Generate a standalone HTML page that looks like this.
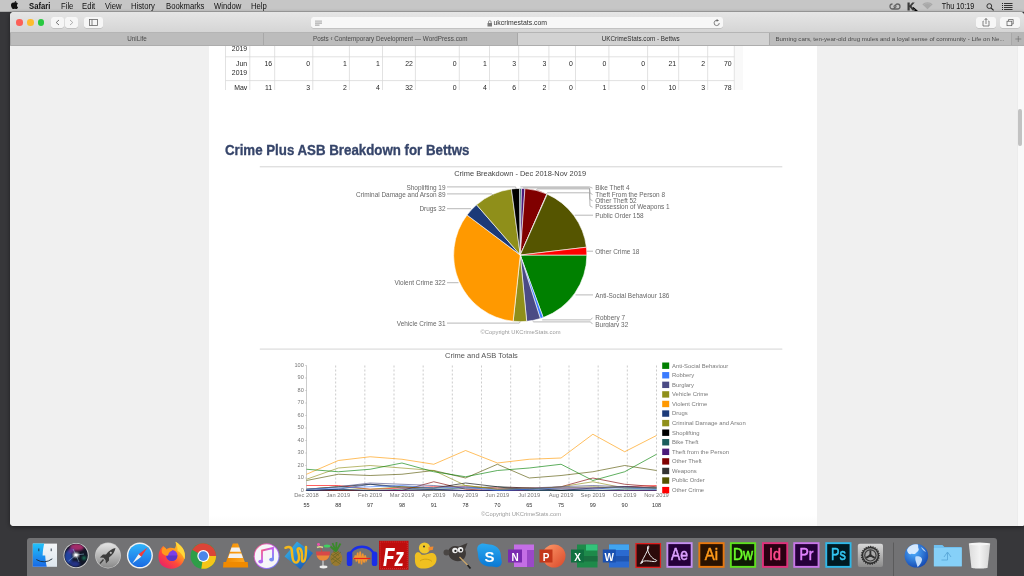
<!DOCTYPE html><html><head><meta charset="utf-8"><style>
*{margin:0;padding:0;box-sizing:border-box}
html,body{width:1024px;height:576px;overflow:hidden;background:#37373a;will-change:transform;font-family:"Liberation Sans",sans-serif}
.a{position:absolute}
#menubar{left:0;top:0;width:1024px;height:11.5px;background:#c6c6c6;color:#111;font-size:7.7px;line-height:12px;border-bottom:0.5px solid #a9a9a9}
#menubar span{position:absolute;top:0.7px;transform:scaleY(1.14);transform-origin:50% 55%}
#win{left:10px;top:12px;width:1014px;height:513.6px;border-radius:4px 4px 2px 4px;overflow:hidden;background:#f0f0f0;box-shadow:0 1px 4px rgba(0,0,0,0.45)}
#toolbar{left:0;top:0;width:1014px;height:20.5px;background:linear-gradient(#e6e6e6,#d5d5d5);border-bottom:1px solid #b5b5b5}
#tabbar{left:0;top:20.5px;width:1014px;height:13px;background:#bcbcbc;border-bottom:1px solid #adadad}
.tab{position:absolute;top:0;height:12px;font-size:6.3px;line-height:12.9px;color:#4a4a4a;text-align:center;white-space:nowrap;overflow:hidden}
#content{left:0;top:33.5px;width:1014px;height:480.1px;background:#f0f0f0;overflow:hidden}
#page{left:199px;top:0;width:608px;height:481px;background:#fff}
.btn{position:absolute;background:#f6f6f6;border-radius:2.5px;box-shadow:0 0.5px 0.5px rgba(0,0,0,0.2)}
#dock{left:27px;top:537.6px;width:969.5px;height:40px;background:#727274;border-radius:3px}
</style></head><body>
<div id="menubar" class="a">
<svg class="a" style="left:11px;top:1.2px" width="7.2" height="8.2" viewBox="0 0 16 18"><path d="M11.5 0c.2 1.3-.4 2.6-1.1 3.4-.8.9-2 1.5-3.1 1.4-.2-1.2.4-2.5 1.1-3.3C9.2.7 10.5.1 11.5 0zM15.3 6.2c-.2.1-2 1.2-2 3.5 0 2.7 2.4 3.6 2.4 3.6s-.4 1.3-1.3 2.6c-.8 1.1-1.6 2.2-2.9 2.2s-1.6-.8-3.1-.8-1.9.8-3.1.8c-1.2 0-2.1-1.200-2.900-2.300C1 14.2 0 11.600 0 9.200 0 5.400 2.500 3.400 4.900 3.400c1.300 0 2.300.8 3.100.8.800 0 1.900-.9 3.400-.9.600 0 2.600.1 3.900 1.900z" fill="#111"/></svg>
<span style="left:29px;font-weight:bold;">Safari</span>
<span style="left:61px;">File</span>
<span style="left:82px;">Edit</span>
<span style="left:105px;">View</span>
<span style="left:131px;">History</span>
<span style="left:166px;">Bookmarks</span>
<span style="left:214px;">Window</span>
<span style="left:251px;">Help</span>
<span style="left:941.8px;font-size:7.2px">Thu 10:19</span>
<svg class="a" style="left:889px;top:2.5px" width="12" height="7" viewBox="0 0 12 7"><path d="M3.5 1 a2.5 2.5 0 1 0 0 5 h5 a2.5 2.5 0 1 0 0 -5 c-1.5 0 -2.5 1.5 -2.5 2.5 c0 1 -1 2.5 -2.5 2.5" stroke="#666" stroke-width="1.3" fill="none"/><circle cx="6" cy="3.5" r="1.3" stroke="#666" stroke-width="0.8" fill="none"/></svg>
<svg class="a" style="left:906.5px;top:2px" width="11" height="9" viewBox="0 0 11 9"><path d="M0.5 0.5 h2.2 v3 l2.6 -3 h2.4 l-3.2 3.4 l3.5 4.6 h-2.5 l-2.8 -3.6 v3.6 h-2.2z" fill="#3a3a3a"/><path d="M6 5.5 l3.6 3 h-1.5 v-1.5" stroke="#000" stroke-width="1.2" fill="none"/></svg>
<svg class="a" style="left:922px;top:2.3px" width="11" height="7.5" viewBox="0 0 11 7.5"><path d="M0.3 2.3 a7.5 7.5 0 0 1 10.4 0 L5.5 7.3z" fill="#a8a8a8"/><path d="M1.9 2.9 a5.5 5.5 0 0 1 7.2 0" stroke="#b8b8b8" stroke-width="0.5" fill="none"/></svg>
<svg class="a" style="left:985.5px;top:2.7px" width="9" height="8" viewBox="0 0 9 8"><circle cx="3.3" cy="3.1" r="2.4" stroke="#222" stroke-width="0.9" fill="none"/><path d="M5 4.8 L7.6 7.3" stroke="#222" stroke-width="1.1"/></svg>
<svg class="a" style="left:1001.5px;top:3px" width="11" height="7" viewBox="0 0 11 7"><rect x="0" y="0" width="1" height="1" fill="#222"/><rect x="0" y="2" width="1" height="1" fill="#222"/><rect x="0" y="4" width="1" height="1" fill="#222"/><rect x="0" y="6" width="1" height="1" fill="#222"/><rect x="2" y="0" width="8.5" height="1" fill="#333"/><rect x="2" y="2" width="8.5" height="1" fill="#333"/><rect x="2" y="4" width="8.5" height="1" fill="#333"/><rect x="2" y="6" width="8.5" height="1" fill="#333"/></svg>
</div>
<div id="win" class="a">
<div id="toolbar" class="a">
<div class="a" style="left:6.2px;top:7.2px;width:6.6px;height:6.6px;border-radius:50%;background:#fc5f57"></div>
<div class="a" style="left:17.2px;top:7.2px;width:6.6px;height:6.6px;border-radius:50%;background:#fdbc2e"></div>
<div class="a" style="left:27.9px;top:7.2px;width:6.6px;height:6.6px;border-radius:50%;background:#28c840"></div>
<div class="btn" style="left:41px;top:5px;width:13px;height:11px"></div>
<div class="btn" style="left:54.5px;top:5px;width:13px;height:11px"></div>
<svg class="a" style="left:41px;top:5px" width="27" height="11"><path d="M8 3 L5.2 5.5 L8 8" stroke="#555" stroke-width="0.8" fill="none"/><path d="M19 3 L21.8 5.5 L19 8" stroke="#999" stroke-width="0.8" fill="none"/></svg>
<div class="btn" style="left:74px;top:5px;width:19px;height:11px"></div>
<svg class="a" style="left:74px;top:5px" width="19" height="11"><rect x="5.5" y="2.5" width="8" height="6" fill="none" stroke="#666" stroke-width="0.8"/><line x1="8" y1="2.5" x2="8" y2="8.5" stroke="#666" stroke-width="0.8"/></svg>
<div class="btn" style="left:301px;top:5px;width:411.5px;height:11px;background:#f7f7f7"></div>
<svg class="a" style="left:305px;top:8px" width="8" height="6"><rect x="0" y="0.6" width="7" height="1" fill="#aaa"/><rect x="0" y="2.6" width="7" height="1" fill="#999"/><rect x="0" y="4.6" width="4.5" height="1" fill="#999"/></svg>
<svg class="a" style="left:477px;top:7.5px" width="6" height="7"><rect x="0.5" y="3" width="4.5" height="3.5" fill="#7a7a7a"/><path d="M1.5 3 V2 a1.3 1.3 0 0 1 2.6 0 V3" stroke="#7a7a7a" stroke-width="0.8" fill="none"/></svg>
<div class="a" style="left:483.5px;top:5px;font-size:6.9px;line-height:11px;color:#333">ukcrimestats.com</div>
<svg class="a" style="left:703px;top:6.5px" width="8" height="8"><path d="M6.3 4 A2.6 2.6 0 1 1 4 1.4" stroke="#666" stroke-width="0.8" fill="none"/><path d="M3.6 0 L6 1.4 L3.6 2.8z" fill="#666"/></svg>
<div class="btn" style="left:966px;top:5px;width:19.5px;height:11px"></div>
<svg class="a" style="left:966px;top:5px" width="20" height="11"><path d="M7.5 4 H7 V9 H13 V4 H12.5" stroke="#555" stroke-width="0.7" fill="none"/><path d="M10 7 V1.5 M8.6 3 L10 1.5 L11.4 3" stroke="#555" stroke-width="0.7" fill="none"/></svg>
<div class="btn" style="left:990px;top:5px;width:19.5px;height:11px"></div>
<svg class="a" style="left:990px;top:5px" width="20" height="11"><rect x="7" y="4.2" width="4.8" height="4.5" fill="none" stroke="#555" stroke-width="0.7"/><path d="M8.5 4.2 V2.5 H13.2 V7 H11.8" stroke="#555" stroke-width="0.7" fill="none"/></svg>
</div>
<div id="tabbar" class="a">
<div class="tab" style="left:0px;width:253px;background:#bcbcbc;border-left:0.5px solid #a8a8a8;">UniLife</div>
<div class="tab" style="left:253px;width:253.5px;background:#bcbcbc;border-left:0.5px solid #a8a8a8;">Posts ‹ Contemporary Development — WordPress.com</div>
<div class="tab" style="left:506.5px;width:252px;background:#d2d2d2;border-left:0.5px solid #a8a8a8;padding-right:4.5px;color:#2e2e2e;">UKCrimeStats.com - Bettws</div>
<div class="tab" style="left:758.5px;width:242px;background:#bcbcbc;border-left:0.5px solid #a8a8a8;font-size:6.15px;">Burning cars, ten-year-old drug mules and a loyal sense of community - Life on Ne...</div>
<div class="tab" style="left:1000.5px;width:13.5px;background:#b6b6b6;border-left:0.5px solid #a8a8a8"><svg width="12" height="12" style="position:absolute;left:0;top:0"><path d="M6.3 3 V9 M3.3 6 H9.3" stroke="#6a6a6a" stroke-width="0.6"/></svg></div>
</div>
<div id="content" class="a">
<div id="page" class="a">
</div>
<div class="a" style="left:199px;top:469px;width:608px;height:12px;background:linear-gradient(#fff,#f9f9f9)"></div>
<svg class="a" width="1013" height="481" viewBox="10 45.5 1013 481" style="left:0;top:0;will-change:transform" font-family="Liberation Sans, sans-serif">
<defs><clipPath id="tclip"><rect x="200" y="40" width="600" height="49.4"/></clipPath></defs>
<g clip-path="url(#tclip)">
<rect x="735" y="40" width="8" height="49.4" fill="#f9f9f9"/>
<line x1="225.5" y1="30" x2="225.5" y2="100" stroke="#d8d8d8" stroke-width="0.75"/>
<line x1="249.8" y1="30" x2="249.8" y2="100" stroke="#d8d8d8" stroke-width="0.75"/>
<line x1="274.7" y1="30" x2="274.7" y2="100" stroke="#d8d8d8" stroke-width="0.75"/>
<line x1="312.8" y1="30" x2="312.8" y2="100" stroke="#d8d8d8" stroke-width="0.75"/>
<line x1="349.4" y1="30" x2="349.4" y2="100" stroke="#d8d8d8" stroke-width="0.75"/>
<line x1="382.5" y1="30" x2="382.5" y2="100" stroke="#d8d8d8" stroke-width="0.75"/>
<line x1="415.4" y1="30" x2="415.4" y2="100" stroke="#d8d8d8" stroke-width="0.75"/>
<line x1="459.3" y1="30" x2="459.3" y2="100" stroke="#d8d8d8" stroke-width="0.75"/>
<line x1="489.5" y1="30" x2="489.5" y2="100" stroke="#d8d8d8" stroke-width="0.75"/>
<line x1="518.7" y1="30" x2="518.7" y2="100" stroke="#d8d8d8" stroke-width="0.75"/>
<line x1="548.9" y1="30" x2="548.9" y2="100" stroke="#d8d8d8" stroke-width="0.75"/>
<line x1="575.5" y1="30" x2="575.5" y2="100" stroke="#d8d8d8" stroke-width="0.75"/>
<line x1="608.9" y1="30" x2="608.9" y2="100" stroke="#d8d8d8" stroke-width="0.75"/>
<line x1="647.6" y1="30" x2="647.6" y2="100" stroke="#d8d8d8" stroke-width="0.75"/>
<line x1="678.7" y1="30" x2="678.7" y2="100" stroke="#d8d8d8" stroke-width="0.75"/>
<line x1="707.7" y1="30" x2="707.7" y2="100" stroke="#d8d8d8" stroke-width="0.75"/>
<line x1="734.3" y1="30" x2="734.3" y2="100" stroke="#d8d8d8" stroke-width="0.75"/>
<line x1="225.5" y1="56.3" x2="734.3" y2="56.3" stroke="#d8d8d8" stroke-width="0.75"/>
<line x1="225.5" y1="80.1" x2="734.3" y2="80.1" stroke="#d8d8d8" stroke-width="0.75"/>
<line x1="225.5" y1="32.8" x2="734.3" y2="32.8" stroke="#d8d8d8" stroke-width="0.75"/>
<g font-size="6.9" fill="#262626" text-anchor="end">
<text x="247.20000000000002" y="50.6">2019</text>
<text x="247.20000000000002" y="65.8">Jun</text>
<text x="247.20000000000002" y="74.6">2019</text>
<text x="272.09999999999997" y="65.9">16</text>
<text x="310.2" y="65.9">0</text>
<text x="346.79999999999995" y="65.9">1</text>
<text x="379.9" y="65.9">1</text>
<text x="412.79999999999995" y="65.9">22</text>
<text x="456.7" y="65.9">0</text>
<text x="486.9" y="65.9">1</text>
<text x="516.1" y="65.9">3</text>
<text x="546.3" y="65.9">3</text>
<text x="572.9" y="65.9">0</text>
<text x="606.3" y="65.9">0</text>
<text x="645.0" y="65.9">0</text>
<text x="676.1" y="65.9">21</text>
<text x="705.1" y="65.9">2</text>
<text x="731.6999999999999" y="65.9">70</text>
<text x="247.20000000000002" y="89.7">May</text>
<text x="272.09999999999997" y="89.7">11</text>
<text x="310.2" y="89.7">3</text>
<text x="346.79999999999995" y="89.7">2</text>
<text x="379.9" y="89.7">4</text>
<text x="412.79999999999995" y="89.7">32</text>
<text x="456.7" y="89.7">0</text>
<text x="486.9" y="89.7">4</text>
<text x="516.1" y="89.7">6</text>
<text x="546.3" y="89.7">2</text>
<text x="572.9" y="89.7">0</text>
<text x="606.3" y="89.7">1</text>
<text x="645.0" y="89.7">0</text>
<text x="676.1" y="89.7">10</text>
<text x="705.1" y="89.7">3</text>
<text x="731.6999999999999" y="89.7">78</text>
</g></g>
<text x="224.9" y="0" transform="translate(0,154.8) scale(1,1.08)" font-size="13.3" font-weight="bold" fill="#36456a" stroke="#36456a" stroke-width="0.3">Crime Plus ASB Breakdown for Bettws</text>
<line x1="259.8" y1="166.3" x2="782.3" y2="166.3" stroke="#cfcfcf" stroke-width="0.9"/>
<line x1="259.8" y1="348.6" x2="782.3" y2="348.6" stroke="#cfcfcf" stroke-width="0.9"/>
<text x="520.2" y="175.6" font-size="7.45" fill="#444" text-anchor="middle">Crime Breakdown - Dec 2018-Nov 2019</text>
<path d="M520.25,254.55 L586.85,254.55 A66.6,66.6 0 0 1 543.22,317.06 Z" fill="#008000" stroke="#fff" stroke-width="0.6" stroke-linejoin="round"/>
<path d="M520.25,254.55 L543.22,317.06 A66.6,66.6 0 0 1 540.33,318.05 Z" fill="#3a7bff" stroke="#fff" stroke-width="0.6" stroke-linejoin="round"/>
<path d="M520.25,254.55 L540.33,318.05 A66.6,66.6 0 0 1 526.68,320.84 Z" fill="#4b4b85" stroke="#fff" stroke-width="0.6" stroke-linejoin="round"/>
<path d="M520.25,254.55 L526.68,320.84 A66.6,66.6 0 0 1 513.17,320.77 Z" fill="#8f8f1a" stroke="#fff" stroke-width="0.6" stroke-linejoin="round"/>
<path d="M520.25,254.55 L513.17,320.77 A66.6,66.6 0 0 1 467.04,214.49 Z" fill="#ff9900" stroke="#fff" stroke-width="0.6" stroke-linejoin="round"/>
<path d="M520.25,254.55 L467.04,214.49 A66.6,66.6 0 0 1 476.55,204.30 Z" fill="#1c3a78" stroke="#fff" stroke-width="0.6" stroke-linejoin="round"/>
<path d="M520.25,254.55 L476.55,204.30 A66.6,66.6 0 0 1 511.44,188.54 Z" fill="#8f8f1a" stroke="#fff" stroke-width="0.6" stroke-linejoin="round"/>
<path d="M520.25,254.55 L511.44,188.54 A66.6,66.6 0 0 1 519.70,187.95 Z" fill="#000000" stroke="#fff" stroke-width="0.6" stroke-linejoin="round"/>
<path d="M520.25,254.55 L519.70,187.95 A66.6,66.6 0 0 1 521.45,187.96 Z" fill="#1a5c5c" stroke="#fff" stroke-width="0.6" stroke-linejoin="round"/>
<path d="M520.25,254.55 L521.45,187.96 A66.6,66.6 0 0 1 524.94,188.12 Z" fill="#4b1a7a" stroke="#fff" stroke-width="0.6" stroke-linejoin="round"/>
<path d="M520.25,254.55 L524.94,188.12 A66.6,66.6 0 0 1 546.87,193.50 Z" fill="#800000" stroke="#fff" stroke-width="0.6" stroke-linejoin="round"/>
<path d="M520.25,254.55 L546.87,193.50 A66.6,66.6 0 0 1 547.27,193.68 Z" fill="#333333" stroke="#fff" stroke-width="0.6" stroke-linejoin="round"/>
<path d="M520.25,254.55 L547.27,193.68 A66.6,66.6 0 0 1 586.39,246.71 Z" fill="#555500" stroke="#fff" stroke-width="0.6" stroke-linejoin="round"/>
<path d="M520.25,254.55 L586.39,246.71 A66.6,66.6 0 0 1 586.85,254.55 Z" fill="#ff0000" stroke="#fff" stroke-width="0.6" stroke-linejoin="round"/>
<polyline points="447,186.4 515.6,186.4 516.3,188.5" fill="none" stroke="#9a9a9a" stroke-width="0.7"/>
<polyline points="447,193.4 491.5,193.4 493.5,195" fill="none" stroke="#9a9a9a" stroke-width="0.7"/>
<polyline points="447,208.2 471,208.2" fill="none" stroke="#9a9a9a" stroke-width="0.7"/>
<polyline points="447,282.2 458.5,282.2" fill="none" stroke="#9a9a9a" stroke-width="0.7"/>
<polyline points="447,322.6 519.3,322.6 520.3,321.2" fill="none" stroke="#9a9a9a" stroke-width="0.7"/>
<polyline points="575.5,294.4 593,294.4" fill="none" stroke="#9a9a9a" stroke-width="0.7"/>
<polyline points="542.2,319.4 590.5,319.4 592.5,317.2" fill="none" stroke="#9a9a9a" stroke-width="0.7"/>
<polyline points="532.5,320.4 533.7,321.4 590.5,321.4 592.5,323.6" fill="none" stroke="#9a9a9a" stroke-width="0.7"/>
<polyline points="586.8,250.7 593,250.7" fill="none" stroke="#9a9a9a" stroke-width="0.7"/>
<polyline points="574.7,214.7 593,214.7" fill="none" stroke="#9a9a9a" stroke-width="0.7"/>
<polyline points="520.4,186.4 589.5,186.4 592.5,187.6" fill="none" stroke="#9a9a9a" stroke-width="0.7"/>
<polyline points="522.8,188 523.5,187.4 589.5,187.4 590,192.5 592.5,194" fill="none" stroke="#9a9a9a" stroke-width="0.7"/>
<polyline points="536.5,189.5 537.3,188.4 589.5,188.4 590,199 592.5,200.2" fill="none" stroke="#9a9a9a" stroke-width="0.7"/>
<polyline points="546.5,193.2 547.3,192.3 589.5,192.3 590,205.5 592.5,206.7" fill="none" stroke="#9a9a9a" stroke-width="0.7"/>
<g font-size="6.45" fill="#666">
<text x="445.5" y="189.7" text-anchor="end">Shoplifting 19</text>
<text x="445.5" y="196.1" text-anchor="end">Criminal Damage and Arson 89</text>
<text x="445.5" y="210.7" text-anchor="end">Drugs 32</text>
<text x="445.5" y="284.8" text-anchor="end">Violent Crime 322</text>
<text x="445.5" y="325.8" text-anchor="end">Vehicle Crime 31</text>
<clipPath id="rlclip"><rect x="590" y="170" width="200" height="156.8"/></clipPath><g clip-path="url(#rlclip)">
<text x="595.3" y="189.89999999999998">Bike Theft 4</text>
<text x="595.3" y="196.2">Theft From the Person 8</text>
<text x="595.3" y="202.39999999999998">Other Theft 52</text>
<text x="595.3" y="208.95">Possession of Weapons 1</text>
<text x="595.3" y="217.39999999999998">Public Order 158</text>
<text x="595.3" y="253.5">Other Crime 18</text>
<text x="595.3" y="297.09999999999997">Anti-Social Behaviour 186</text>
<text x="595.3" y="319.09999999999997">Robbery 7</text>
<text x="595.3" y="326.4">Burglary 32</text>
</g>
</g>
<text x="520.6" y="333.4" font-size="5.8" fill="#9a9a9a" text-anchor="middle">©Copyright UKCrimeStats.com</text>
<text x="481.4" y="357.8" font-size="7.5" fill="#555" text-anchor="middle">Crime and ASB Totals</text>
<line x1="335.67" y1="365.0" x2="335.67" y2="490.0" stroke="#aaa" stroke-width="0.6" stroke-dasharray="2,2"/>
<line x1="364.83" y1="365.0" x2="364.83" y2="490.0" stroke="#aaa" stroke-width="0.6" stroke-dasharray="2,2"/>
<line x1="394.00" y1="365.0" x2="394.00" y2="490.0" stroke="#aaa" stroke-width="0.6" stroke-dasharray="2,2"/>
<line x1="423.17" y1="365.0" x2="423.17" y2="490.0" stroke="#aaa" stroke-width="0.6" stroke-dasharray="2,2"/>
<line x1="452.33" y1="365.0" x2="452.33" y2="490.0" stroke="#aaa" stroke-width="0.6" stroke-dasharray="2,2"/>
<line x1="481.50" y1="365.0" x2="481.50" y2="490.0" stroke="#aaa" stroke-width="0.6" stroke-dasharray="2,2"/>
<line x1="510.67" y1="365.0" x2="510.67" y2="490.0" stroke="#aaa" stroke-width="0.6" stroke-dasharray="2,2"/>
<line x1="539.83" y1="365.0" x2="539.83" y2="490.0" stroke="#aaa" stroke-width="0.6" stroke-dasharray="2,2"/>
<line x1="569.00" y1="365.0" x2="569.00" y2="490.0" stroke="#aaa" stroke-width="0.6" stroke-dasharray="2,2"/>
<line x1="598.17" y1="365.0" x2="598.17" y2="490.0" stroke="#aaa" stroke-width="0.6" stroke-dasharray="2,2"/>
<line x1="627.33" y1="365.0" x2="627.33" y2="490.0" stroke="#aaa" stroke-width="0.6" stroke-dasharray="2,2"/>
<line x1="656.50" y1="365.0" x2="656.50" y2="490.0" stroke="#aaa" stroke-width="0.6" stroke-dasharray="2,2"/>
<line x1="306.5" y1="365.0" x2="306.5" y2="490.0" stroke="#aaa" stroke-width="0.6"/>
<line x1="306.5" y1="490.0" x2="656.5" y2="490.0" stroke="#999" stroke-width="0.8"/>
<g font-size="5.6" fill="#777" text-anchor="end">
<line x1="305.3" y1="490.0" x2="306.5" y2="490.0" stroke="#aaa" stroke-width="0.6"/>
<text x="303.8" y="491.3">0</text>
<line x1="305.3" y1="477.5" x2="306.5" y2="477.5" stroke="#aaa" stroke-width="0.6"/>
<text x="303.8" y="478.8">10</text>
<line x1="305.3" y1="465.0" x2="306.5" y2="465.0" stroke="#aaa" stroke-width="0.6"/>
<text x="303.8" y="466.3">20</text>
<line x1="305.3" y1="452.5" x2="306.5" y2="452.5" stroke="#aaa" stroke-width="0.6"/>
<text x="303.8" y="453.8">30</text>
<line x1="305.3" y1="440.0" x2="306.5" y2="440.0" stroke="#aaa" stroke-width="0.6"/>
<text x="303.8" y="441.3">40</text>
<line x1="305.3" y1="427.5" x2="306.5" y2="427.5" stroke="#aaa" stroke-width="0.6"/>
<text x="303.8" y="428.8">50</text>
<line x1="305.3" y1="415.0" x2="306.5" y2="415.0" stroke="#aaa" stroke-width="0.6"/>
<text x="303.8" y="416.3">60</text>
<line x1="305.3" y1="402.5" x2="306.5" y2="402.5" stroke="#aaa" stroke-width="0.6"/>
<text x="303.8" y="403.8">70</text>
<line x1="305.3" y1="390.0" x2="306.5" y2="390.0" stroke="#aaa" stroke-width="0.6"/>
<text x="303.8" y="391.3">80</text>
<line x1="305.3" y1="377.5" x2="306.5" y2="377.5" stroke="#aaa" stroke-width="0.6"/>
<text x="303.8" y="378.8">90</text>
<line x1="305.3" y1="365.0" x2="306.5" y2="365.0" stroke="#aaa" stroke-width="0.6"/>
<text x="303.8" y="366.3">100</text>
</g>
<polyline points="306.50,485.00 338.32,485.00 370.14,488.75 401.95,487.50 433.77,486.25 465.59,486.25 497.41,487.50 529.23,487.50 561.05,487.50 592.86,487.50 624.68,486.25 656.50,485.00" fill="none" stroke="#ff0000" stroke-opacity="0.7" stroke-width="0.9"/>
<polyline points="306.50,480.00 338.32,473.75 370.14,475.00 401.95,473.75 433.77,470.00 465.59,477.50 497.41,463.75 529.23,477.50 561.05,475.00 592.86,471.25 624.68,465.00 656.50,470.00" fill="none" stroke="#555500" stroke-opacity="0.7" stroke-width="0.9"/>
<polyline points="306.50,490.00 338.32,490.00 370.14,490.00 401.95,490.00 433.77,490.00 465.59,490.00 497.41,490.00 529.23,490.00 561.05,490.00 592.86,490.00 624.68,490.00 656.50,490.00" fill="none" stroke="#333333" stroke-opacity="0.7" stroke-width="0.9"/>
<polyline points="306.50,490.00 338.32,490.00 370.14,490.00 401.95,490.00 433.77,481.25 465.59,488.75 497.41,490.00 529.23,488.75 561.05,486.25 592.86,477.50 624.68,483.75 656.50,486.25" fill="none" stroke="#800000" stroke-opacity="0.7" stroke-width="0.9"/>
<polyline points="306.50,490.00 338.32,488.75 370.14,490.00 401.95,490.00 433.77,488.75 465.59,490.00 497.41,490.00 529.23,490.00 561.05,490.00 592.86,490.00 624.68,490.00 656.50,490.00" fill="none" stroke="#4b1a7a" stroke-opacity="0.7" stroke-width="0.9"/>
<polyline points="306.50,490.00 338.32,488.75 370.14,490.00 401.95,488.75 433.77,488.75 465.59,487.50 497.41,486.25 529.23,490.00 561.05,490.00 592.86,490.00 624.68,488.75 656.50,488.75" fill="none" stroke="#1a5c5c" stroke-opacity="0.7" stroke-width="0.9"/>
<polyline points="306.50,488.75 338.32,486.25 370.14,483.75 401.95,486.25 433.77,487.50 465.59,482.50 497.41,486.25 529.23,487.50 561.05,490.00 592.86,487.50 624.68,486.25 656.50,487.50" fill="none" stroke="#000000" stroke-opacity="0.7" stroke-width="0.9"/>
<polyline points="306.50,478.75 338.32,467.50 370.14,465.00 401.95,467.50 433.77,470.00 465.59,485.00 497.41,488.75 529.23,488.75 561.05,486.25 592.86,481.25 624.68,487.50 656.50,487.50" fill="none" stroke="#8f8f1a" stroke-opacity="0.7" stroke-width="0.9"/>
<polyline points="306.50,490.00 338.32,488.75 370.14,483.75 401.95,487.50 433.77,488.75 465.59,490.00 497.41,490.00 529.23,488.75 561.05,488.75 592.86,488.75 624.68,486.25 656.50,487.50" fill="none" stroke="#1c3a78" stroke-opacity="0.7" stroke-width="0.9"/>
<polyline points="306.50,473.75 338.32,460.00 370.14,456.25 401.95,458.75 433.77,463.75 465.59,450.00 497.41,462.50 529.23,458.75 561.05,457.50 592.86,433.75 624.68,451.25 656.50,435.00" fill="none" stroke="#ff9900" stroke-opacity="0.7" stroke-width="0.9"/>
<polyline points="306.50,488.75 338.32,486.25 370.14,488.75 401.95,486.25 433.77,487.50 465.59,485.00 497.41,488.75 529.23,487.50 561.05,487.50 592.86,486.25 624.68,487.50 656.50,487.50" fill="none" stroke="#8f8f1a" stroke-opacity="0.7" stroke-width="0.9"/>
<polyline points="306.50,488.75 338.32,486.25 370.14,482.50 401.95,483.75 433.77,485.00 465.59,487.50 497.41,488.75 529.23,487.50 561.05,486.25 592.86,485.00 624.68,486.25 656.50,487.50" fill="none" stroke="#4b4b85" stroke-opacity="0.7" stroke-width="0.9"/>
<polyline points="306.50,488.75 338.32,487.50 370.14,486.25 401.95,485.00 433.77,487.50 465.59,486.25 497.41,490.00 529.23,488.75 561.05,487.50 592.86,487.50 624.68,487.50 656.50,488.75" fill="none" stroke="#3a7bff" stroke-opacity="0.7" stroke-width="0.9"/>
<polyline points="306.50,468.75 338.32,471.25 370.14,468.75 401.95,462.50 433.77,471.25 465.59,476.25 497.41,470.00 529.23,467.50 561.05,463.75 592.86,480.00 624.68,471.25 656.50,453.75" fill="none" stroke="#008000" stroke-opacity="0.7" stroke-width="0.9"/>
<g font-size="5.75" fill="#777" text-anchor="middle">
<text x="306.50" y="496.4">Dec 2018</text>
<text x="338.32" y="496.4">Jan 2019</text>
<text x="370.14" y="496.4">Feb 2019</text>
<text x="401.95" y="496.4">Mar 2019</text>
<text x="433.77" y="496.4">Apr 2019</text>
<text x="465.59" y="496.4">May 2019</text>
<text x="497.41" y="496.4">Jun 2019</text>
<text x="529.23" y="496.4">Jul 2019</text>
<text x="561.05" y="496.4">Aug 2019</text>
<text x="592.86" y="496.4">Sep 2019</text>
<text x="624.68" y="496.4">Oct 2019</text>
<text x="656.50" y="496.4">Nov 2019</text>
</g><g font-size="5.5" fill="#333" text-anchor="middle">
<text x="306.50" y="506.9">55</text>
<text x="338.32" y="506.9">88</text>
<text x="370.14" y="506.9">97</text>
<text x="401.95" y="506.9">98</text>
<text x="433.77" y="506.9">91</text>
<text x="465.59" y="506.9">78</text>
<text x="497.41" y="506.9">70</text>
<text x="529.23" y="506.9">65</text>
<text x="561.05" y="506.9">75</text>
<text x="592.86" y="506.9">99</text>
<text x="624.68" y="506.9">90</text>
<text x="656.50" y="506.9">108</text>
</g>
<text x="521" y="515.1" font-size="5.8" fill="#9a9a9a" text-anchor="middle">©Copyright UKCrimeStats.com</text>
<g font-size="5.9" fill="#7a7a7a">
<rect x="662.2" y="362.0" width="7" height="6.4" fill="#008000"/>
<text x="672" y="367.09999999999997">Anti-Social Behaviour</text>
<rect x="662.2" y="371.57" width="7" height="6.4" fill="#3a7bff"/>
<text x="672" y="376.66999999999996">Robbery</text>
<rect x="662.2" y="381.14" width="7" height="6.4" fill="#4b4b85"/>
<text x="672" y="386.23999999999995">Burglary</text>
<rect x="662.2" y="390.71" width="7" height="6.4" fill="#8f8f1a"/>
<text x="672" y="395.80999999999995">Vehicle Crime</text>
<rect x="662.2" y="400.28000000000003" width="7" height="6.4" fill="#ff9900"/>
<text x="672" y="405.38">Violent Crime</text>
<rect x="662.2" y="409.85" width="7" height="6.4" fill="#1c3a78"/>
<text x="672" y="414.95">Drugs</text>
<rect x="662.2" y="419.42" width="7" height="6.4" fill="#8f8f1a"/>
<text x="672" y="424.52">Criminal Damage and Arson</text>
<rect x="662.2" y="428.99" width="7" height="6.4" fill="#000000"/>
<text x="672" y="434.09">Shoplifting</text>
<rect x="662.2" y="438.56" width="7" height="6.4" fill="#1a5c5c"/>
<text x="672" y="443.65999999999997">Bike Theft</text>
<rect x="662.2" y="448.13" width="7" height="6.4" fill="#4b1a7a"/>
<text x="672" y="453.22999999999996">Theft from the Person</text>
<rect x="662.2" y="457.7" width="7" height="6.4" fill="#800000"/>
<text x="672" y="462.79999999999995">Other Theft</text>
<rect x="662.2" y="467.27000000000004" width="7" height="6.4" fill="#333333"/>
<text x="672" y="472.37">Weapons</text>
<rect x="662.2" y="476.84" width="7" height="6.4" fill="#555500"/>
<text x="672" y="481.93999999999994">Public Order</text>
<rect x="662.2" y="486.41" width="7" height="6.4" fill="#ff0000"/>
<text x="672" y="491.51">Other Crime</text>
</g>
</svg>
<div class="a" style="left:1006.6px;top:0;width:7.4px;height:481px;background:#f9f9f9;border-left:0.5px solid #ececec"></div>
<div class="a" style="left:1008px;top:63.3px;width:4.3px;height:37.5px;background:#c2c2c2;border-radius:2.2px"></div>
</div>
</div>
<div id="dock" class="a"></div>
<svg class="a" style="left:0;top:0" width="1024" height="576" viewBox="0 0 1024 576" font-family="Liberation Sans, sans-serif">
<defs>
<linearGradient id="gFinder" x1="0" y1="0" x2="0" y2="1"><stop offset="0" stop-color="#22c3fa"/><stop offset="1" stop-color="#1868e6"/></linearGradient>
<linearGradient id="gFinderR" x1="0" y1="0" x2="0" y2="1"><stop offset="0" stop-color="#f4f6f8"/><stop offset="1" stop-color="#dde6ee"/></linearGradient>
<radialGradient id="gSiri" cx="0.5" cy="0.5" r="0.5"><stop offset="0" stop-color="#ffffff"/><stop offset="0.18" stop-color="#b9e6ff"/><stop offset="0.45" stop-color="#3f55b8"/><stop offset="1" stop-color="#15183a"/></radialGradient>
<linearGradient id="gLaunch" x1="0" y1="0" x2="0" y2="1"><stop offset="0" stop-color="#e4e4e4"/><stop offset="1" stop-color="#8a8a8a"/></linearGradient>
<linearGradient id="gSafari" x1="0" y1="0" x2="0" y2="1"><stop offset="0" stop-color="#2fb4fb"/><stop offset="1" stop-color="#1a6ae3"/></linearGradient>
<radialGradient id="gFox" cx="0.6" cy="0.3" r="0.8"><stop offset="0" stop-color="#ffe14a"/><stop offset="0.45" stop-color="#ff8a1e"/><stop offset="0.8" stop-color="#f43a4e"/><stop offset="1" stop-color="#e02a7a"/></radialGradient>
<linearGradient id="gCone" x1="0" y1="0" x2="1" y2="0"><stop offset="0" stop-color="#f08a00"/><stop offset="1" stop-color="#ffa820"/></linearGradient>
<linearGradient id="gItunes" x1="0" y1="0" x2="1" y2="1"><stop offset="0" stop-color="#fb5c74"/><stop offset="0.5" stop-color="#c45cf0"/><stop offset="1" stop-color="#5a8cf8"/></linearGradient>
<linearGradient id="gSky" x1="0" y1="0" x2="0" y2="1"><stop offset="0" stop-color="#2aa8f0"/><stop offset="1" stop-color="#0a78d4"/></linearGradient>
<linearGradient id="gPrefs" x1="0" y1="0" x2="0" y2="1"><stop offset="0" stop-color="#d8d8d8"/><stop offset="1" stop-color="#8c8c8c"/></linearGradient>
<radialGradient id="gGlobe" cx="0.4" cy="0.35" r="0.7"><stop offset="0" stop-color="#4fb0ff"/><stop offset="1" stop-color="#1346b0"/></radialGradient>
<linearGradient id="gTrash" x1="0" y1="0" x2="1" y2="0"><stop offset="0" stop-color="#dcdcdc"/><stop offset="0.5" stop-color="#f2f2f2"/><stop offset="1" stop-color="#d4d4d4"/></linearGradient>
<linearGradient id="gPpt" x1="0" y1="0" x2="1" y2="1"><stop offset="0" stop-color="#ff9b6a"/><stop offset="1" stop-color="#d9482a"/></linearGradient>
</defs>
<rect x="32.8" y="543.6" width="24.2" height="23.2" fill="url(#gFinderR)"/>
<path d="M32.8 543.6 H44.2 C43.4 547 42.8 551 42.6 555.5 H45.2 C45.4 559.5 46 563.5 46.8 566.8 H32.8Z" fill="url(#gFinder)"/>
<path d="M38.8 548.5 V551.2 M51.2 548.5 V551.2" stroke="#1c2b3a" stroke-width="0.9"/>
<path d="M36.3 559.5 Q44.5 564.5 52.3 558.8" stroke="#1c2b3a" stroke-width="0.9" fill="none"/>
<filter id="fBlur" x="-20%" y="-20%" width="140%" height="140%"><feGaussianBlur stdDeviation="1.3"/></filter><clipPath id="cSiri"><circle cx="76.1" cy="555.5" r="11.4"/></clipPath>
<circle cx="76.1" cy="555.5" r="12.6" fill="#cfcfcf"/><circle cx="76.1" cy="555.5" r="11.7" fill="#121626"/>
<g clip-path="url(#cSiri)"><g filter="url(#fBlur)" opacity="0.8"><ellipse cx="77" cy="547" rx="7" ry="3.8" fill="#c8307a"/><ellipse cx="68.5" cy="557" rx="4" ry="7" fill="#2850c0"/><ellipse cx="75" cy="564" rx="5" ry="3" fill="#2a3aa0"/><ellipse cx="84" cy="558" rx="1.8" ry="1.8" fill="#20b070"/><ellipse cx="71.5" cy="550.5" rx="3" ry="2.5" fill="#7a3ab0"/></g>
<path d="M76 555 L68.5 561 M76 555 L84 554 M76 555 L79 562 M76 555 L73 549" stroke="#aee8ff" stroke-width="0.6" opacity="0.7"/><ellipse cx="76" cy="555" rx="2.8" ry="2.2" fill="#fff" filter="url(#fBlur)"/><ellipse cx="76" cy="555" rx="1.4" ry="1.1" fill="#fff"/></g>
<circle cx="108" cy="555.5" r="12.9" fill="#c8c8c8"/><circle cx="108" cy="555.5" r="12.2" fill="url(#gLaunch)"/>
<path d="M115.5 548 C112 548.5 108.5 551 106 554.5 L103 554.5 L99.8 557.5 L103.5 557.8 L105.5 560 L106 563.5 L109 560.4 L109 557.5 C112.5 555 115 551.5 115.5 548Z" fill="#3d3d3d"/><circle cx="110.8" cy="552.8" r="1.1" fill="#bbb"/><path d="M103.5 559.5 L100 563.5" stroke="#3d3d3d" stroke-width="1.4"/>
<circle cx="139.9" cy="555.5" r="13" fill="#f2f2f2"/><circle cx="139.9" cy="555.5" r="11.6" fill="url(#gSafari)"/>
<path d="M147.5 547.5 L141.3 556.8 L138.5 554.2Z" fill="#f43b3b"/><path d="M132.3 563.5 L138.5 554.2 L141.3 556.8Z" fill="#f4f4f4"/>
<linearGradient id="gFox2" x1="1" y1="0" x2="0.2" y2="1"><stop offset="0" stop-color="#ffe44a"/><stop offset="0.35" stop-color="#ffa41e"/><stop offset="0.65" stop-color="#ff4a3a"/><stop offset="1" stop-color="#e8206a"/></linearGradient>
<path d="M160 550 C157.5 555 158 562 162 565.5 C166.5 569.5 176 570 181 565 C186 560 185.5 552 182.5 548 C181 546 179 544 175.5 541.8 C176.5 545 176 547 174.5 548.5 C172 547.5 168 547.5 166 549.5 C165.5 548 164 546.5 163.3 546 C162 547 161 548.5 160 550Z" fill="url(#gFox2)"/>
<path d="M175.5 541.8 C179 544 181 546 182.5 548 C185 551.5 185.5 556 184.5 559.5 C183 555 180 552 177.5 551 C177.8 548 177 545 175.5 541.8Z" fill="#ffd83a"/>
<circle cx="171.8" cy="555.5" r="5.6" fill="#7b3ee8"/><path d="M166.2 555.5 A5.6 5.6 0 0 0 177.4 555.5Z" fill="#5b36c8"/>
<path d="M162.5 548 C164 546.5 165.5 547.5 166.5 549.5 C168.5 548.5 171 549 172.5 550.5 C170 551 168.5 553 168 555.5 C166 556 163.5 555 162 553 C161.5 551 161.8 549.5 162.5 548Z" fill="#ff9a1e"/>
<circle cx="203.3" cy="556.1" r="12.8" fill="#2e9e48"/>
<path d="M203.3 556.1 L192.20000000000002 549.7 A12.8 12.8 0 0 1 216.10000000000002 556.1 Z" fill="#db4437"/>
<path d="M203.3 556.1 L216.10000000000002 556.1 A12.8 12.8 0 0 1 201.3 568.7 Z" fill="#f5c518"/>
<circle cx="203.3" cy="556.1" r="6" fill="#fff"/><circle cx="203.3" cy="556.1" r="4.8" fill="#4a86e8"/>
<path d="M232.8 543.5 h5.2 l7 19 h-19.2z" fill="url(#gCone)"/><path d="M231.5 547.5 h7.8 l1.5 4.3 h-10.8z" fill="#f2f2f2"/><path d="M229.6 553.5 h11.8 l1.6 4.4 h-15z" fill="#f2f2f2"/><path d="M223.5 562 h24.2 l0.5 5.5 h-25.2z" fill="#f08a00"/>
<circle cx="266.6" cy="556.2" r="12.9" fill="url(#gItunes)"/><circle cx="266.6" cy="556.2" r="11.9" fill="#f6f6f8"/>
<path d="M262 561.5 V550.5 L273 548 V559.5" stroke="url(#gItunes)" stroke-width="1.8" fill="none"/><ellipse cx="260.7" cy="561.6" rx="2.4" ry="1.9" fill="#a86af2"/><ellipse cx="271.6" cy="559.6" rx="2.4" ry="1.9" fill="#7a8af4"/>
<linearGradient id="gDia" x1="0" y1="0" x2="1" y2="1"><stop offset="0" stop-color="#38c0f0"/><stop offset="1" stop-color="#1848a8"/></linearGradient>
<path d="M297 541.4 L313 553 L300.4 569.3 L284.5 556.4Z" fill="url(#gDia)"/>
<path d="M285.5 547.8 C288 546.5 290.5 546.8 291.5 549 C292.5 552 291.5 560 294.5 562 C297 563.5 299.5 561 299 556 C298.5 551 296.5 549.5 298 548.5 C300 547.5 302 550 302 555 C302 559.5 301.5 562 303.5 561.5 C306 561 306 552 306 547" stroke="#f4b81a" stroke-width="2.5" fill="none" stroke-linecap="round"/>
<ellipse cx="336.2" cy="558.5" rx="6" ry="7.5" fill="#9a7a30"/><path d="M331 554 l10 8 M331 560 l10 -8 M331.5 558 l9 6 M331.5 564 l9 -7 M333 551.5 l6 4 M333 555.5 l6 -4" stroke="#5a6020" stroke-width="0.7" opacity="0.8"/><path d="M336 551.5 l-3.5 -8.5 M336 551.5 l0.5 -9.5 M336 551.5 l4.5 -8 M336 551.5 l-5.5 -5" stroke="#3a8a2a" stroke-width="1.8"/>
<path d="M316 551.5 h14 c0 6 -3 9 -7 9 c-4 0 -7 -3 -7 -9z" fill="#d84848"/><path d="M316.5 555.5 h13 c-1 3 -3 5 -6.5 5 c-3.5 0 -5.5 -2 -6.5 -5z" fill="#e88a3a"/><path d="M323 560.5 v5.5" stroke="#ddd" stroke-width="1.1"/><ellipse cx="323.5" cy="567" rx="4" ry="1.4" fill="#eee"/><path d="M320 546 l2 6" stroke="#c44" stroke-width="0.9"/><ellipse cx="318.5" cy="544.5" rx="1.5" ry="1.4" fill="#f050b0"/><ellipse cx="327" cy="546" rx="3.2" ry="1.5" fill="#40d060"/><path d="M317 547.5 q3 -1.5 6 0" stroke="#d8d890" stroke-width="1.4" fill="none"/>
<path d="M349.5 558 C349.5 543 374.5 543 374.5 558" stroke="#1a2ee8" stroke-width="2.4" fill="none"/><rect x="346.8" y="551.5" width="5.5" height="14.5" rx="2.6" fill="#1a2ee8"/><rect x="371.8" y="551.5" width="5.5" height="14.5" rx="2.6" fill="#1a2ee8"/>
<path d="M353 558.5 h1.5 l1-3 l1 6 l1.2-9 l1.3 11 l1.2-12 l1.3 13 l1.2-11 l1.3 9 l1.2-7 l1 5 l1-2 h1.5" stroke="#ff9a2a" stroke-width="1.6" fill="none" opacity="0.9"/><path d="M353.5 558.5 h17" stroke="#e8201a" stroke-width="1.2"/>
<rect x="379" y="540.8" width="29.5" height="29" fill="#bf0d0d"/><rect x="380.2" y="542" width="27.1" height="26.6" fill="none" stroke="#d83a3a" stroke-width="0.8" stroke-dasharray="1,1"/>
<text x="393.5" y="566" font-size="26" font-weight="bold" font-style="italic" fill="#fff" text-anchor="middle" textLength="21" lengthAdjust="spacingAndGlyphs">Fz</text>
<path d="M415 558 C414 552 419 551 421 554 C422 556 427 554 431 553 C436 552 437.5 558 436 562 C434 567.5 427 569 421 568.5 C416 568 414.5 563 415 558Z" fill="#f0c020"/><circle cx="424.5" cy="548" r="5.6" fill="#f2c82a"/><path d="M428.5 547 l5 -0.5 l-0.8 3.5 l-4.2 0.6z" fill="#f08a30"/><circle cx="424" cy="546.5" r="1" fill="#333"/><path d="M420 561 c3 -2.5 9 -2.5 12 0.5" stroke="#c89a10" stroke-width="0.8" fill="none"/>
<path d="M448 552 C449 546.5 454.5 545 459 546.5 L467.5 543 L465 549.5 C467 553 466 558.5 461.5 560.5 C455.5 563 448.5 559 448 552Z" fill="#3e3a38"/><circle cx="446.5" cy="552.5" r="3" fill="#4a4644"/><circle cx="455" cy="550.5" r="2.8" fill="#eee"/><circle cx="460.5" cy="549.8" r="2.8" fill="#eee"/><circle cx="455.4" cy="550.9" r="1.1" fill="#222"/><circle cx="460.9" cy="550.2" r="1.1" fill="#222"/><path d="M459.5 557 L469 566.5" stroke="#c9a46a" stroke-width="1.2"/><path d="M467.5 565 L470.5 568.5" stroke="#222" stroke-width="1.8"/>
<path d="M483 543.6 C486 543.6 487 544.5 489.5 544.5 C496 544.5 501 549.5 501 556 C501 558.5 501.8 560 501.8 562 C501.8 565 499.5 567.2 496.5 567.2 C494.5 567.2 493 566.5 489.5 566.5 C483 566.5 478 561.5 478 555 C478 552.5 477.2 551 477.2 549 C477.2 546 479.8 543.6 483 543.6Z" fill="url(#gSky)"/>
<text x="489.5" y="561.5" font-size="15" font-weight="bold" fill="#fff" text-anchor="middle">S</text>
<rect x="514" y="544.5" width="20" height="22.5" fill="#c46ee6"/><rect x="527" y="550" width="7" height="17" fill="#9a48c8"/><rect x="508" y="549.5" width="14" height="13" fill="#7a2ab0"/>
<text x="515" y="560.5" font-size="10" font-weight="bold" fill="#fff" text-anchor="middle">N</text>
<circle cx="554" cy="556" r="11.5" fill="url(#gPpt)"/><rect x="539.5" y="549.5" width="13" height="13" fill="#c4381a"/>
<text x="546" y="560.5" font-size="10" font-weight="bold" fill="#fff" text-anchor="middle">P</text>
<rect x="577" y="544.5" width="20.5" height="23" fill="#1e8a4a"/><rect x="586" y="544.5" width="11.5" height="6" fill="#33c37a"/><rect x="577" y="556" width="20.5" height="5.5" fill="#1a7040"/><rect x="571" y="549.5" width="13" height="13" fill="#107040"/>
<text x="577.5" y="560.5" font-size="10" font-weight="bold" fill="#fff" text-anchor="middle">X</text>
<rect x="609" y="544.5" width="20" height="23" fill="#2b6ad0"/><rect x="609" y="544.5" width="20" height="5.5" fill="#41a5f0"/><rect x="609" y="556" width="20" height="5.5" fill="#1f54b0"/><rect x="602.8" y="549.5" width="13" height="13" fill="#1a50b0"/>
<text x="609.3" y="560.5" font-size="10" font-weight="bold" fill="#fff" text-anchor="middle">W</text>
<rect x="635.3" y="543" width="25.8" height="25" fill="#e01f1f"/><rect x="636.6" y="544.3" width="23.2" height="22.4" fill="#2c0b0b"/>
<path d="M641 563 C644 557 647 552 648.5 548 C649.5 545.5 647.5 545 647.5 548 C647.5 553 652 559 656 560 C657.5 560.5 656.5 562 653 561.5 C649 561 643.5 560 641 562.5 C639.5 564 641 564 643 562" stroke="#eee" stroke-width="1" fill="none"/>
<rect x="666.4" y="542.2" width="26.2" height="25.6" fill="#c48ef0"/><rect x="668.3" y="544.1" width="22.4" height="21.8" fill="#25003a"/>
<text x="679.5" y="560.1" font-size="16.4" fill="#dca2ff" stroke="#dca2ff" stroke-width="0.55" text-anchor="middle" textLength="17" lengthAdjust="spacingAndGlyphs">Ae</text>
<rect x="698.4" y="542.2" width="26.2" height="25.6" fill="#e8780e"/><rect x="700.3" y="544.1" width="22.4" height="21.8" fill="#2a1200"/>
<text x="711.5" y="560.1" font-size="16.4" fill="#ff9a1a" stroke="#ff9a1a" stroke-width="0.55" text-anchor="middle" textLength="13.3" lengthAdjust="spacingAndGlyphs">Ai</text>
<rect x="729.9" y="542.2" width="26.2" height="25.6" fill="#5ee01e"/><rect x="731.8" y="544.1" width="22.4" height="21.8" fill="#0e1a04"/>
<text x="743.0" y="560.1" font-size="16.4" fill="#6cff2a" stroke="#6cff2a" stroke-width="0.55" text-anchor="middle" textLength="20" lengthAdjust="spacingAndGlyphs">Dw</text>
<rect x="762" y="542.2" width="26.2" height="25.6" fill="#e0307a"/><rect x="763.9" y="544.1" width="22.4" height="21.8" fill="#2a0012"/>
<text x="775.1" y="560.1" font-size="16.4" fill="#ff4a8c" stroke="#ff4a8c" stroke-width="0.55" text-anchor="middle" textLength="12" lengthAdjust="spacingAndGlyphs">Id</text>
<rect x="793.3" y="542.2" width="26.2" height="25.6" fill="#c876e8"/><rect x="795.1999999999999" y="544.1" width="22.4" height="21.8" fill="#26003a"/>
<text x="806.4" y="560.1" font-size="16.4" fill="#e282ff" stroke="#e282ff" stroke-width="0.55" text-anchor="middle" textLength="14" lengthAdjust="spacingAndGlyphs">Pr</text>
<rect x="825.3" y="542.2" width="26.2" height="25.6" fill="#2eb8e8"/><rect x="827.1999999999999" y="544.1" width="22.4" height="21.8" fill="#001a22"/>
<text x="838.4" y="560.1" font-size="16.4" fill="#33c8f4" stroke="#33c8f4" stroke-width="0.55" text-anchor="middle" textLength="15" lengthAdjust="spacingAndGlyphs">Ps</text>
<rect x="857.8" y="543.7" width="25.2" height="23.3" rx="2" fill="url(#gPrefs)"/>
<polygon points="880.00,555.40 879.98,556.03 878.93,556.52 878.83,557.08 879.67,557.88 879.49,558.49 878.35,558.69 878.11,559.20 878.71,560.20 878.38,560.73 877.22,560.64 876.87,561.07 877.19,562.19 876.73,562.62 875.64,562.22 875.18,562.55 875.20,563.71 874.65,564.01 873.69,563.35 873.16,563.54 872.88,564.67 872.27,564.82 871.52,563.93 870.96,563.98 870.40,565.00 869.77,564.98 869.28,563.93 868.72,563.83 867.92,564.67 867.31,564.49 867.11,563.35 866.60,563.11 865.60,563.71 865.07,563.38 865.16,562.22 864.73,561.87 863.61,562.19 863.18,561.73 863.58,560.64 863.25,560.18 862.09,560.20 861.79,559.65 862.45,558.69 862.26,558.16 861.13,557.88 860.98,557.27 861.87,556.52 861.82,555.96 860.80,555.40 860.82,554.77 861.87,554.28 861.97,553.72 861.13,552.92 861.31,552.31 862.45,552.11 862.69,551.60 862.09,550.60 862.42,550.07 863.58,550.16 863.93,549.73 863.61,548.61 864.07,548.18 865.16,548.58 865.62,548.25 865.60,547.09 866.15,546.79 867.11,547.45 867.64,547.26 867.92,546.13 868.53,545.98 869.28,546.87 869.84,546.82 870.40,545.80 871.03,545.82 871.52,546.87 872.08,546.97 872.88,546.13 873.49,546.31 873.69,547.45 874.20,547.69 875.20,547.09 875.73,547.42 875.64,548.58 876.07,548.93 877.19,548.61 877.62,549.07 877.22,550.16 877.55,550.62 878.71,550.60 879.01,551.15 878.35,552.11 878.54,552.64 879.67,552.92 879.82,553.53 878.93,554.28 878.98,554.84" fill="#303030"/><circle cx="870.4" cy="555.4" r="7.2" fill="#9a9a9a"/><circle cx="870.4" cy="555.4" r="6.2" fill="#3a3a3a"/><circle cx="870.4" cy="555.4" r="5" fill="#a8a8a8"/>
<path d="M870.4 555.4 L870.4 550.4 M870.4 555.4 L874.6999999999999 557.9 M870.4 555.4 L866.1 557.9" stroke="#303030" stroke-width="1.8"/><circle cx="870.4" cy="555.4" r="1.5" fill="#303030"/>
<line x1="893.5" y1="542.5" x2="893.5" y2="576" stroke="#555" stroke-width="0.8"/>
<circle cx="916.4" cy="555.8" r="11.8" fill="url(#gGlobe)"/>
<path d="M907 550 C908.5 546 913 544 917.5 544.3 C919 545.5 917.5 547 918.5 548.5 C919.5 550.5 917 552 915.5 553.5 C914 555 912.5 553 911 554 C909.5 555 907.5 553 907 550Z" fill="#e2f0ff" opacity="0.92"/><path d="M915.5 556.5 C918.5 555.5 922.5 557 922 560 C921.5 563 919 566 917.5 567 C917 563.5 914.5 560 915.5 556.5Z" fill="#d2e8ff" opacity="0.9"/><path d="M921 547 C923 548 925 550 926 552 C924 551.5 922 549.5 921 547Z" fill="#d8ecff" opacity="0.8"/>
<path d="M933.9 545 h8.5 l2 2 h17.3 v19.3 h-27.8z" fill="#70c0f0"/><rect x="933.9" y="548" width="27.8" height="18.3" fill="#86d0f8"/><path d="M944 557 l3.5 -5 l3.5 5 M947.5 552 v8 h-6" stroke="#5aa8d8" stroke-width="0.9" fill="none"/>
<path d="M968.8 543.5 h21.4 l-2.6 24.2 c-1 1 -15 1 -16.2 0z" fill="url(#gTrash)"/><ellipse cx="979.5" cy="544" rx="10.7" ry="1.5" fill="#f5f5f5"/>
</svg>
</body></html>
